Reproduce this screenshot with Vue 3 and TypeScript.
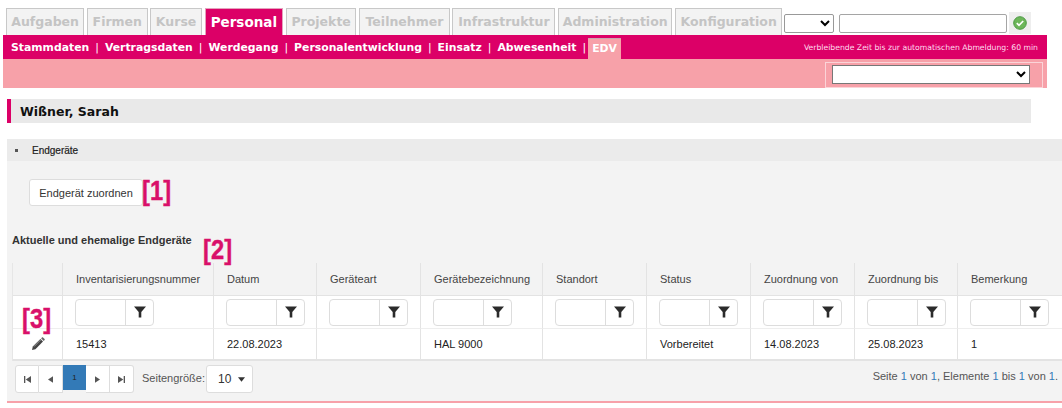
<script setup lang="ts">
const tabs = [
  { label: 'Aufgaben', w: 78.3 }, { label: 'Firmen', w: 60.7 }, { label: 'Kurse', w: 51.6 },
  { label: 'Personal', w: 78.6, active: true }, { label: 'Projekte', w: 70.7 }, { label: 'Teilnehmer', w: 90.6 },
  { label: 'Infrastruktur', w: 103 }, { label: 'Administration', w: 114.3 }, { label: 'Konfiguration', w: 107.3 },
]
const subs = ['Stammdaten', 'Vertragsdaten', 'Werdegang', 'Personalentwicklung', 'Einsatz', 'Abwesenheit']
const columns = [
  { label: '', w: 50 }, { label: 'Inventarisierungsnummer', w: 151 }, { label: 'Datum', w: 103 },
  { label: 'Geräteart', w: 104 }, { label: 'Gerätebezeichnung', w: 122 }, { label: 'Standort', w: 104 },
  { label: 'Status', w: 104 }, { label: 'Zuordnung von', w: 104 }, { label: 'Zuordnung bis', w: 103 },
  { label: 'Bemerkung', w: 105 },
]
const row = ['15413', '22.08.2023', '', 'HAL 9000', '', 'Vorbereitet', '14.08.2023', '25.08.2023', '1']
</script>

<template>
  <div class="page">
    <div class="top">
      <div v-for="t in tabs" :key="t.label" class="tab" :class="{ active: t.active }" :style="{ width: t.w + 'px' }">{{ t.label }}</div>
      <div class="search">
        <select class="s1"><option></option></select>
        <input class="i1" type="text" />
        <div class="go">
          <svg width="14" height="14" viewBox="0 0 14 14">
            <circle cx="7" cy="7" r="6.3" fill="#6db65a" stroke="#4d9a45" />
            <path d="M3.8 7.2 6 9.4l4.2-4.4" fill="none" stroke="#fff" stroke-width="1.7" />
          </svg>
        </div>
      </div>
    </div>

    <div class="subbar">
      <div class="subnav">
        <template v-for="s in subs" :key="s">
          <span class="sub">{{ s }}</span><span class="sep">|</span>
        </template>
        <span class="sub edv">EDV</span>
      </div>
      <div class="timer">Verbleibende Zeit bis zur automatischen Abmeldung: 60 min</div>
    </div>
    <div class="lightbar">
      <div class="selbox"><select class="s2"><option></option></select></div>
    </div>

    <div class="namebar">Wißner, Sarah</div>

    <section class="panel">
      <div class="panelhead"><i class="bullet"></i>Endgeräte</div>
      <div class="actions"><button class="btn">Endgerät zuordnen</button></div>
      <h3 class="title">Aktuelle und ehemalige Endgeräte</h3>
      <table class="grid">
        <colgroup><col v-for="c in columns" :key="c.label" :style="{ width: c.w + 'px' }" /></colgroup>
        <thead>
          <tr class="hrow"><th v-for="c in columns" :key="c.label">{{ c.label }}</th></tr>
          <tr class="frow">
            <td></td>
            <td v-for="c in columns.slice(1)" :key="c.label">
              <div class="filter">
                <span class="finput"></span>
                <span class="fbtn">
                  <svg width="12" height="12" viewBox="0 0 12 12"><path d="M0 .5h12L7.3 6v5.500H4.700V6z" fill="#2b2b2b" /></svg>
                </span>
              </div>
            </td>
          </tr>
        </thead>
        <tbody>
          <tr class="drow">
            <td class="edit">
              <svg width="14" height="14" viewBox="0 0 14 14">
                <path d="M1 13l.8-3.400 7.600-7.600 2.600 2.600-7.600 7.600z" fill="#444" />
                <path d="M10.100 1.300l.9-.9c.3-.3.7-.3 1 0l1.600 1.600c.3.3.3.7 0 1l-.9.9z" fill="#666" />
                <path d="M3 9.600l6.800-6.800" stroke="#bbb" stroke-width=".7" />
              </svg>
            </td>
            <td v-for="(v, i) in row" :key="i">{{ v }}</td>
          </tr>
        </tbody>
      </table>
      <div class="pager">
        <div class="pbtns">
          <span class="pb first"><svg width="7" height="7" viewBox="0 0 8 8"><path d="M0 0h1.500v8H0zM8 0v8L2 4z" fill="#555" /></svg></span>
          <span class="pb"><svg width="5" height="7" viewBox="0 0 6 8"><path d="M6 0v8L0 4z" fill="#555" /></svg></span>
          <span class="pb cur">1</span>
          <span class="pb"><svg width="5" height="7" viewBox="0 0 6 8"><path d="M0 0v8l6-4z" fill="#555" /></svg></span>
          <span class="pb last"><svg width="7" height="7" viewBox="0 0 8 8"><path d="M8 0H6.500v8H8zM0 0v8l6-4z" fill="#555" /></svg></span>
        </div>
        <span class="psize">Seitengröße:</span>
        <span class="pdrop">10<svg width="7" height="5" viewBox="0 0 8 5"><path d="M0 0h8L4 5z" fill="#333" /></svg></span>
        <span class="pinfo">Seite <b>1</b> von <b>1</b>, Elemente <b>1</b> bis <b>1</b> von <b>1</b>.</span>
      </div>
    </section>

    <span class="mark m1">[1]</span>
    <span class="mark m2">[2]</span>
    <span class="mark m3">[3]</span>
  </div>
</template>

<style>
html, body { margin: 0; background: #fff; overflow: hidden; }
</style>

<style scoped>
.page {
  position: relative;
  width: 1062px;
  height: 408px;
  overflow: hidden;
  font-family: "Liberation Sans", Arial, sans-serif;
  background: #fff;
}
.top {
  display: flex;
  height: 27px;
  padding: 8px 0 0 6px;
  gap: 2.67px;
}
.tab {
  box-sizing: border-box;
  height: 27px;
  flex: none;
  border: 1px solid #c8c8c8;
  border-bottom: 0;
  background: #f3f3f3;
  color: #c4c4c4;
  font: bold 12.500px/26px "DejaVu Sans", Verdana, sans-serif;
  text-align: center;
  white-space: nowrap;
}
.tab.active {
  background: #dc0067;
  border-color: #e4a2bd;
  color: #fff;
  font-size: 13.500px;
}
.search {
  display: flex;
  align-items: flex-start;
  margin-left: -1px;
}
.s1 {
  box-sizing: border-box;
  width: 50px;
  height: 19px;
  margin-top: 6px;
  background: #fff;
  border: 1px solid #999;
  border-radius: 2px;
}
.i1 {
  box-sizing: border-box;
  width: 168px;
  height: 19px;
  margin: 6px 0 0 5px;
  padding: 0;
  background: #fff;
  border: 1px solid #a5a5a5;
  border-radius: 2px;
}
.go {
  width: 22px;
  height: 22px;
  margin: 4px 0 0 2px;
  background: #eee;
  display: flex;
  align-items: center;
  justify-content: center;
}
.subbar {
  margin-left: 3px;
  width: 1044px;
  height: 24px;
  background: #dc0067;
  display: flex;
  justify-content: space-between;
  color: #fff;
}
.subnav {
  display: flex;
  padding-left: 8px;
  font: bold 10.850px/25px "DejaVu Sans", Verdana, sans-serif;
  white-space: nowrap;
}
.sep {
  font-weight: normal;
  margin: 0 6px;
}
.edv {
  box-sizing: border-box;
  margin: 3px 0 0 -4px;
  height: 21px;
  width: 33px;
  background: #f7a1a9;
  border-top: 1px solid #c9a8b0;
  line-height: 20px;
  text-align: center;
}
.timer {
  font: 7.700px/25px "DejaVu Sans", Verdana, sans-serif;
  padding-right: 9px;
  color: #fde;
}
.lightbar {
  margin-left: 3px;
  width: 1044px;
  height: 29px;
  background: #f7a1a9;
  display: flex;
  justify-content: flex-end;
}
.selbox {
  box-sizing: border-box;
  width: 218px;
  height: 26px;
  margin: 3px 4px 0 0;
  padding: 2px 0 0 6px;
  border: 1px solid #fbd4d8;
}
.s2 {
  display: block;
  box-sizing: border-box;
  width: 198px;
  height: 19px;
  background: #fff;
  border: 1px solid #777;
}
.namebar {
  box-sizing: border-box;
  margin: 11px 0 0 7px;
  width: 1024px;
  height: 24px;
  background: #e9e9e9;
  border-left: 4px solid #dc0067;
  padding-left: 9px;
  color: #111;
  font: bold 12.500px/25px "DejaVu Sans", Verdana, sans-serif;
}
.panel {
  margin: 16px 0 0 7px;
  height: 262px;
  background: #f3f3f3;
  border-bottom: 2px solid #f7a1a9;
  box-sizing: content-box;
  overflow: hidden;
}
.panelhead {
  height: 22px;
  background: #ebebeb;
  display: flex;
  align-items: center;
  font-size: 10px;
  font-weight: 500;
  color: #222;
  padding-left: 8px;
  -webkit-text-stroke: .2px #222;
}
.bullet {
  width: 3px;
  height: 3px;
  background: #555;
  margin-right: 14px;
}
.actions {
  padding: 18px 0 0 22px;
  height: 27px;
}
.btn {
  box-sizing: border-box;
  width: 114px;
  height: 27px;
  padding: 0;
  background: #fff;
  border: 1px solid #ddd;
  border-radius: 3px;
  color: #333;
  font: 11px "Liberation Sans", Arial, sans-serif;
}
.title {
  margin: 27px 0 0 5px;
  height: 15px;
  font: bold 11px/15px "Liberation Sans", Arial, sans-serif;
  color: #333;
}
.grid {
  margin: 15px 0 0 5px;
  width: 1050px;
  table-layout: fixed;
  border-collapse: separate;
  border-spacing: 0;
  font-size: 11px;
  color: #333;
  border-left: 1px solid #e6e6e6;
}
.grid th, .grid td {
  padding: 0 0 0 13px;
  border-right: 1px solid #e3e3e3;
  text-align: left;
  font-weight: normal;
  white-space: nowrap;
  overflow: hidden;
}
.grid .frow td { padding-left: 12px; }
.hrow th {
  height: 32px;
  border-bottom: 1px solid #e3e3e3;
  color: #444;
}
.frow td {
  height: 32px;
  background: #fff;
  border-bottom: 1px solid #eee;
}
.drow td {
  height: 30px;
  background: #fff;
  border-bottom: 2px solid #e3e3e3;
  color: #222;
}
.grid .edit {
  padding: 0;
  text-align: center;
  line-height: 0;
}
.filter {
  box-sizing: border-box;
  width: 79px;
  height: 27px;
  display: flex;
  border: 1px solid #ddd;
  border-radius: 4px;
  background: #fff;
}
.finput { flex: 1; border-right: 1px solid #ddd; }
.fbtn {
  width: 27px;
  display: flex;
  align-items: center;
  justify-content: center;
}
.pager {
  display: flex;
  align-items: flex-start;
  padding: 4px 0 0 8px;
  font-size: 11px;
  color: #555;
}
.pbtns { display: flex; }
.pb {
  box-sizing: border-box;
  width: 24px;
  height: 28px;
  background: #fff;
  border: 1px solid #ddd;
  border-left: 0;
  display: flex;
  align-items: center;
  justify-content: center;
}
.first { border-left: 1px solid #ddd; border-radius: 3px 0 0 3px; }
.last { border-radius: 0 3px 3px 0; }
.cur {
  width: 23px;
  height: 25px;
  background: #337ab7;
  border: 0;
  color: #222;
  font-size: 8px;
}
.psize { margin: 7px 0 0 8px; }
.pdrop {
  box-sizing: border-box;
  width: 47px;
  height: 28px;
  margin-left: 1px;
  background: #fff;
  border: 1px solid #ddd;
  border-radius: 3px;
  display: flex;
  align-items: center;
  gap: 7px;
  padding-left: 11px;
  color: #333;
  font-size: 12px;
}
.pinfo {
  margin: 5px 0 0 auto;
  padding-right: 4px;
  white-space: nowrap;
}
.pinfo b { font-weight: normal; color: #337ab7; }
.mark {
  position: absolute;
  color: #d9106a;
  font: bold 27px/30px "Liberation Sans", Arial, sans-serif;
  -webkit-text-stroke: .4px #d9106a;
  transform: scaleX(.88);
  transform-origin: left center;
}
.m1 { left: 142px; top: 176px; }
.m2 { left: 203px; top: 235px; }
.m3 { left: 22px; top: 304px; }
</style>
